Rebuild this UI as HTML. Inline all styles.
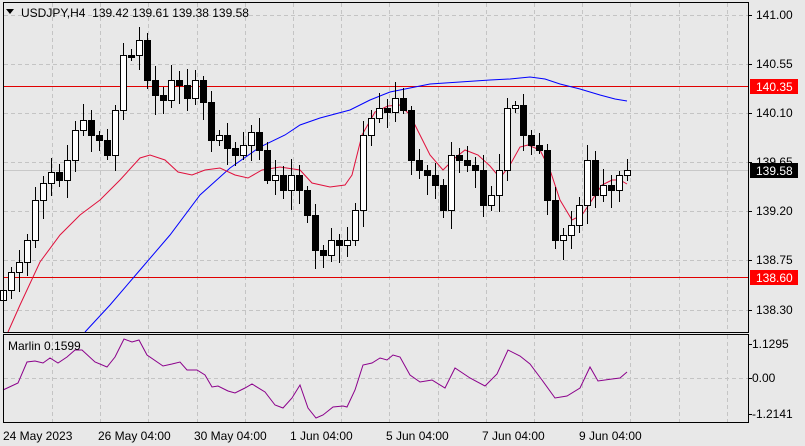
<!DOCTYPE html>
<html><head><meta charset="utf-8"><style>
body{margin:0;width:805px;height:446px;background:#e8e8e8;overflow:hidden;font-family:"Liberation Sans",sans-serif}
svg{position:absolute;left:0;top:0}
text{font-family:"Liberation Sans",sans-serif;font-size:12px;fill:#000}
</style></head><body>
<svg id="s" width="805" height="446" xmlns="http://www.w3.org/2000/svg">
<rect width="805" height="446" fill="#e8e8e8"/>
<g id="grid" stroke="#c4c4c4" stroke-dasharray="4,3" stroke-width="1"></g>
<line x1="3" y1="170.5" x2="748" y2="170.5" stroke="#c8c8c8"/>
<line x1="3" y1="86.5" x2="748" y2="86.5" stroke="#e00000"/>
<line x1="3" y1="277.5" x2="748" y2="277.5" stroke="#e00000"/>
<polyline fill="none" stroke="#0000ff" stroke-width="1" points="85,332 110,305 140,270 170,235 200,195 230,168 260,147 285,135 300,125 320,118 350,110 370,100 390,92 410,88 430,84 460,82 490,80 510,79 530,77 545,79 560,84 580,89 600,95 615,99 627,101"/>
<polyline fill="none" stroke="#e0103c" stroke-width="1" points="8,332 20,305 40,262 60,235 80,215 100,200 120,180 140,158 150,155 165,160 178,172 192,175 205,170 220,168 235,175 248,178 262,170 280,167 300,170 312,183 330,187 345,185 352,175 362,135 375,112 388,106 400,105 410,115 420,135 430,155 443,170 455,158 465,150 478,155 490,166 500,178 510,165 520,147 528,145 540,150 550,170 560,200 572,220 582,215 592,200 602,185 612,180 620,180 627,184"/>
<g id="c"></g>
<polyline fill="none" stroke="#8b008b" stroke-width="1" points="3,390 18,383 27,362 35,361 43,363 50,358 58,363 67,357 75,350 82,350 95,362 107,367 115,357 124,339 132,342 139,340 147,355 163,366 172,364 180,362 187,370 197,370 205,375 212,387 218,386 228,391 235,393 245,388 252,384 265,392 275,405 283,408 292,398 300,385 308,408 316,418 323,415 333,407 343,406 347,407 355,390 363,365 372,363 380,358 387,360 393,355 400,357 410,375 420,382 432,380 445,388 455,368 470,378 485,386 497,374 508,350 520,356 530,364 542,380 555,398 567,396 580,388 590,367 598,381 612,379 620,378 627,372"/>
<rect x="3.5" y="2.5" width="745" height="330" fill="none" stroke="#000"/>
<rect x="3.5" y="334.5" width="745" height="88" fill="none" stroke="#000"/>
<g id="ax" stroke="#000"></g>
<rect x="750" y="79" width="48" height="15" fill="#ff0000"/>
<rect x="750" y="163" width="48" height="15" fill="#000"/>
<rect x="750" y="270" width="48" height="15" fill="#ff0000"/>
<text x="756" y="19">141.00</text>
<text x="756" y="68">140.55</text>
<text x="756" y="91" style="fill:#fff">140.35</text>
<text x="756" y="117">140.10</text>
<text x="756" y="166">139.65</text>
<text x="756" y="175" style="fill:#fff">139.58</text>
<text x="756" y="215">139.20</text>
<text x="756" y="264">138.75</text>
<text x="756" y="282" style="fill:#fff">138.60</text>
<text x="756" y="314">138.30</text>
<text x="752" y="348">1.1295</text>
<text x="752" y="382">0.00</text>
<text x="752" y="418">-1.2141</text>
<text x="8" y="350">Marlin 0.1599</text>
<path d="M6,9 L14,9 L10,14 Z" fill="#000"/>
<text x="21" y="17" xml:space="preserve">USDJPY,H4  139.42 139.61 139.38 139.58</text>
<text x="3" y="440">24 May 2023</text>
<text x="98" y="440">26 May 04:00</text>
<text x="194" y="440">30 May 04:00</text>
<text x="290" y="440">1 Jun 04:00</text>
<text x="386" y="440">5 Jun 04:00</text>
<text x="482" y="440">7 Jun 04:00</text>
<text x="579" y="440">9 Jun 04:00</text>
</svg>
<script>
(function(){
var NS="http://www.w3.org/2000/svg";
function el(p,t,a){var e=document.createElementNS(NS,t);for(var k in a)e.setAttribute(k,a[k]);p.appendChild(e);return e;}
var g=document.getElementById('grid');
for(var x=52;x<748;x+=48.2){var xx=Math.round(x)+.5;el(g,'line',{x1:xx,y1:3,x2:xx,y2:332});el(g,'line',{x1:xx,y1:335,x2:xx,y2:422});}
[15,64,113,162,211,260,310].forEach(function(y){el(g,'line',{x1:4,y1:y+.5,x2:748,y2:y+.5});});
el(g,'line',{x1:4,y1:378.5,x2:748,y2:378.5});
var ax=document.getElementById('ax');
[15,64,113,162,211,260,310,344,378,414].forEach(function(y){el(ax,'line',{x1:748,y1:y+.5,x2:752,y2:y+.5});});
var cl=[300,290,272,262,240,200,183,172,180,160,130,120,135,140,155,110,55,55,40,80,95,100,80,85,98,80,102,140,135,148,155,145,132,150,180,175,190,175,190,215,250,255,240,245,240,210,135,118,108,112,98,110,160,170,175,185,210,155,160,165,170,205,195,170,108,105,135,145,150,200,240,235,225,205,160,195,185,190,175,170];
var c=document.getElementById('c');var n=cl.length;
for(var i=1;i<n;i++){
 var x=627-(n-1-i)*8;var o=cl[i-1],cc=cl[i];
 var bt=Math.min(o,cc),bb=Math.max(o,cc);if(bb-bt<2){bb=bt+2;}
 var hi=bt-(4+(i*7)%13),lo=bb+(4+(i*11)%17);
 el(c,'line',{x1:x+.5,y1:Math.max(hi,3),x2:x+.5,y2:Math.min(lo,332),stroke:'#000'});
 el(c,'rect',{x:x-2.5,y:bt+.5,width:6,height:bb-bt,fill:cc<o?'#fff':'#000',stroke:'#000'});
}
})();
</script>
</body></html>
